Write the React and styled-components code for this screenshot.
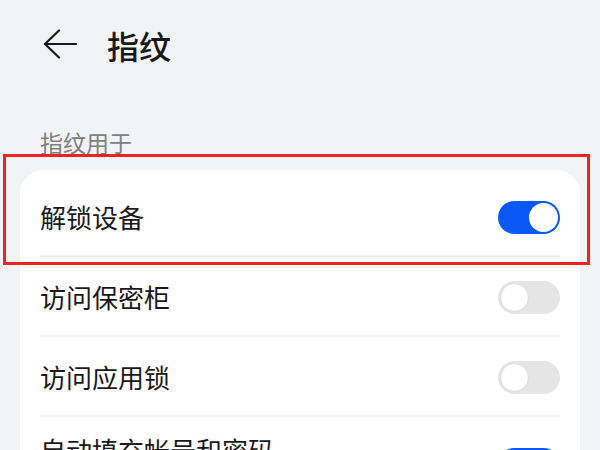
import React from 'react';
import styled, { createGlobalStyle } from 'styled-components';

const GlobalStyle = createGlobalStyle`
  html, body {
    margin: 0;
    padding: 0;
    background: #f1f3f5;
    font-family: "Noto Sans CJK SC", "Noto Sans", sans-serif;
    color: #191919;
  }
`;

const Page = styled.div`
  width: 600px;
  height: 450px;
  overflow: hidden;
  background: #f1f3f5;
`;

const Header = styled.header`
  height: 88px;
  display: flex;
  align-items: center;
  padding-left: 43px;
  gap: 30px;
`;

const BackButton = styled.button`
  border: 0;
  background: none;
  padding: 0;
  width: 34px;
  height: 30px;
  display: flex;
  color: #191919;
`;

const Title = styled.h1`
  margin: 0;
  font-size: 32px;
  font-weight: 500;
  line-height: 40px;
  margin-top: 2px;
`;

const SectionLabel = styled.div`
  margin: 38px 0 12px 40px;
  font-size: 23px;
  line-height: 32px;
  color: #808080;
`;

const Card = styled.div`
  position: relative;
  margin: 0 20px;
  padding-top: 7px;
  background: #ffffff;
  border-radius: 24px;
`;

const Row = styled.div`
  position: relative;
  display: flex;
  align-items: ${p => (p.$tall ? 'flex-start' : 'center')};
  justify-content: space-between;
  height: ${p => (p.$tall ? '96px' : '80px')};
  padding: ${p => (p.$tall ? '15px 20px 0' : '0 20px')};
  box-sizing: border-box;

  &::after {
    content: '';
    display: ${p => (p.$last ? 'none' : 'block')};
    position: absolute;
    left: 20px;
    right: 20px;
    bottom: 0;
    height: 2px;
    background: #efefef;
  }
`;

const RowLabel = styled.span`
  font-size: 26px;
  line-height: 36px;
`;

const Toggle = styled.span`
  position: relative;
  flex: none;
  width: 62px;
  height: 33px;
  border-radius: 17px;
  background: ${p => (p.$on ? '#0a59f7' : '#e5e5e5')};
  margin-top: ${p => (p.$tall ? '16px' : '0')};

  &::before {
    content: '';
    position: absolute;
    top: 2px;
    left: ${p => (p.$on ? '31px' : '2px')};
    width: 29px;
    height: 29px;
    border-radius: 50%;
    background: #ffffff;
    box-sizing: border-box;
    border: ${p => (p.$on ? 'none' : '1px solid #dadada')};
  }
`;

const Highlight = styled.div`
  position: absolute;
  left: -17px;
  top: -16px;
  width: 587px;
  height: 111px;
  border: 3px solid #ec2424;
  box-sizing: border-box;
  pointer-events: none;
`;

const BackArrow = () => (
  <svg width="34" height="30" viewBox="0 0 34 30" fill="none" stroke="currentColor" strokeWidth="2.2" strokeLinecap="round" strokeLinejoin="round">
    <path d="M33 15H2" />
    <path d="M16 1.5L2 15l14 13.5" />
  </svg>
);

const items = [
  { label: '解锁设备', on: true },
  { label: '访问保密柜', on: false },
  { label: '访问应用锁', on: false },
  { label: '自动填充帐号和密码', on: true, tall: true },
];

export default function App() {
  return (
    <Page>
      <GlobalStyle />
      <Header>
        <BackButton aria-label="返回">
          <BackArrow />
        </BackButton>
        <Title>指纹</Title>
      </Header>
      <SectionLabel>指纹用于</SectionLabel>
      <Card>
        <Highlight />
        {items.map((it, i) => (
          <Row key={it.label} $tall={it.tall} $last={i === items.length - 1}>
            <RowLabel>{it.label}</RowLabel>
            <Toggle $on={it.on} $tall={it.tall} />
          </Row>
        ))}
      </Card>
    </Page>
  );
}
